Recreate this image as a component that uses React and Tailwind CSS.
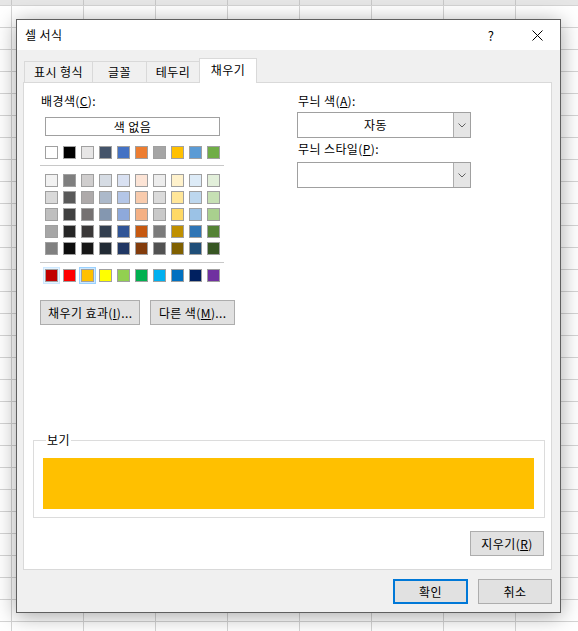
import React from "react";

const row1 = ["#FFFFFF", "#000000", "#E7E6E6", "#44546A", "#4472C4", "#ED7D31", "#A5A5A5", "#FFC000", "#5B9BD5", "#70AD47"];
const tints = [
  ["#F2F2F2", "#7F7F7F", "#D0CECE", "#D6DCE4", "#D9E1F2", "#FCE4D6", "#EDEDED", "#FFF2CC", "#DDEBF7", "#E2EFDA"],
  ["#D9D9D9", "#595959", "#AEAAAA", "#ACB9CA", "#B4C6E7", "#F8CBAD", "#DBDBDB", "#FFE699", "#BDD7EE", "#C6E0B4"],
  ["#BFBFBF", "#404040", "#757171", "#8497B0", "#8EA9DB", "#F4B084", "#C9C9C9", "#FFD966", "#9BC2E6", "#A9D08E"],
  ["#A6A6A6", "#262626", "#3A3838", "#333F4F", "#305496", "#C65911", "#7B7B7B", "#BF8F00", "#2F75B5", "#548235"],
  ["#808080", "#0D0D0D", "#161616", "#222B35", "#203764", "#833C0C", "#525252", "#806000", "#1F4E78", "#375623"],
];
const standard = ["#C00000", "#FF0000", "#FFC000", "#FFFF00", "#92D050", "#00B050", "#00B0F0", "#0070C0", "#002060", "#7030A0"];

function Swatch({ color, state }) {
  const cls =
    state === "selected"
      ? "bg-[#cce8ff] border-[#99d1ff]"
      : state === "hover"
      ? "bg-[#e5f3ff] border-[#cce8ff]"
      : "border-transparent";
  return (
    <div className={"w-[17px] h-[17px] border flex items-center justify-center " + cls}>
      <div className="w-[13px] h-[13px] border border-[#a0a0a0]" style={{ backgroundColor: color }} />
    </div>
  );
}

function SwatchRow({ colors, states = {} }) {
  return (
    <div className="flex gap-px ml-[3px]">
      {colors.map((c, i) => (
        <Swatch key={i} color={c} state={states[i]} />
      ))}
    </div>
  );
}

function Chevron() {
  return (
    <svg width="8" height="5" viewBox="0 0 8 5">
      <path d="M0.5 0.5 L4 4 L7.5 0.5" fill="none" stroke="#606060" strokeWidth="1" />
    </svg>
  );
}

function Combo({ value }) {
  return (
    <div className="w-[174px] h-[26px] border border-[#a0a0a0] bg-white flex">
      <div className="flex-1 flex items-center justify-center leading-[16px]">{value}</div>
      <div className="w-[17px] border-l border-[#adadad] bg-[#e5e5e5] flex items-center justify-center">
        <Chevron />
      </div>
    </div>
  );
}

function Btn({ className = "", children }) {
  return (
    <div className={"h-[25px] bg-[#e1e1e1] border border-[#adadad] flex items-center justify-center leading-[16px] " + className}>
      {children}
    </div>
  );
}

function Tab({ className = "", active, children }) {
  return (
    <div
      className={
        "flex items-center justify-center border border-[#d9d9d9] leading-[16px] " +
        (active ? "h-[25px] bg-white border-b-0 pb-[2px] " : "h-[22px] bg-[#f0f0f0] ") +
        className
      }
    >
      {children}
    </div>
  );
}

function Dialog() {
  return (
    <div className="absolute left-[16px] top-[19px] w-[545px] h-[594px] border border-[#5f5f5f] bg-[#f0f0f0] shadow-[0_3px_20px_rgba(0,0,0,0.35)] flex flex-col">
      <div className="h-[30px] shrink-0 bg-white flex items-center">
        <span className="pl-[8px] leading-[16px]">셀 서식</span>
        <span className="ml-auto w-[46px] text-center text-[13px] leading-[16px] pt-px">?</span>
        <span className="w-[46px] flex items-center justify-center">
          <svg width="11" height="11" viewBox="0 0 11 11">
            <path d="M0.5 0.5 L10.5 10.5 M10.5 0.5 L0.5 10.5" stroke="#000" strokeWidth="1" />
          </svg>
        </span>
      </div>

      <div className="flex-1 flex flex-col pl-[6px] pr-[8px] pt-[8px]">
        <div className="flex items-end h-[25px] pl-px relative z-10 -mb-px">
          <Tab className="w-[69px]">표시 형식</Tab>
          <Tab className="w-[55px] -ml-px">글꼴</Tab>
          <Tab className="w-[54px] -ml-px">테두리</Tab>
          <Tab className="w-[58px] -ml-px" active>
            채우기
          </Tab>
        </div>

        <div className="h-[488px] shrink-0 border border-[#d9d9d9] bg-white flex flex-col">
          <div className="flex pl-[16px] pt-[10px]">
            <div className="w-[195px] flex flex-col">
              <div className="leading-[16px] pl-px">
                배경색(<u>C</u>):
              </div>
              <div className="ml-[5px] mt-[8px] w-[175px] h-[19px] border border-[#a0a0a0] flex items-center justify-center leading-[16px]">
                색 없음
              </div>
              <div className="mt-[8px]">
                <SwatchRow colors={row1} />
              </div>
              <div className="mt-[4px] h-px w-[184px] bg-[#c8c8c8]" />
              <div className="mt-[6px] flex flex-col">
                {tints.map((r, i) => (
                  <SwatchRow key={i} colors={r} />
                ))}
              </div>
              <div className="mt-[5px] h-px w-[184px] bg-[#c8c8c8]" />
              <div className="mt-[4px]">
                <SwatchRow colors={standard} states={{ 0: "hover", 2: "selected" }} />
              </div>
              <div className="mt-[16px] flex">
                <Btn className="w-[101px]">
                  채우기 효과(<u>I</u>)...
                </Btn>
                <Btn className="w-[85px] ml-[10px]">
                  다른 색(<u>M</u>)...
                </Btn>
              </div>
            </div>

            <div className="ml-[62px] w-[174px] flex flex-col">
              <div className="leading-[16px] pl-px">
                무늬 색(<u>A</u>):
              </div>
              <div className="mt-[3px]">
                <Combo value="자동" />
              </div>
              <div className="mt-[3px] leading-[16px] pl-px">
                무늬 스타일(<u>P</u>):
              </div>
              <div className="mt-[5px]">
                <Combo value="" />
              </div>
            </div>
          </div>

          <fieldset className="mt-[107px] ml-[9px] mr-[6px] border border-[#dcdcdc] pl-[9px] pr-[10px] pb-[8px]">
            <legend className="ml-[3px] px-px leading-[16px]">보기</legend>
            <div className="mt-[10px] h-[51px] bg-[#FFC000]" />
          </fieldset>

          <Btn className="self-end mt-[13px] mr-[7px] w-[74px]">
            지우기(<u>R</u>)
          </Btn>
        </div>

        <div className="mt-[9px] flex justify-end gap-[10px]">
          <div className="w-[75px] h-[25px] bg-[#e1e1e1] border-2 border-[#0078d7] flex items-center justify-center leading-[16px]">
            확인
          </div>
          <Btn className="w-[74px]">취소</Btn>
        </div>
      </div>
    </div>
  );
}

export default function App() {
  return (
    <div className="relative w-[578px] h-[631px] overflow-hidden bg-white font-['Noto_Sans_CJK_KR',sans-serif] text-[12px] tracking-[0.4px] text-black flex flex-col">
      <div className="h-[5px] shrink-0 bg-[#e6e6e6] bg-[linear-gradient(to_right,#c8c8c8_1px,transparent_1px)] bg-size-[72px_5px] bg-position-[11px_0px]" />
      <div className="flex-1 bg-[linear-gradient(to_right,#d4d4d4_1px,transparent_1px),linear-gradient(to_bottom,#d4d4d4_1px,transparent_1px)] bg-size-[72px_22px] bg-position-[11px_0px]" />
      <Dialog />
    </div>
  );
}
